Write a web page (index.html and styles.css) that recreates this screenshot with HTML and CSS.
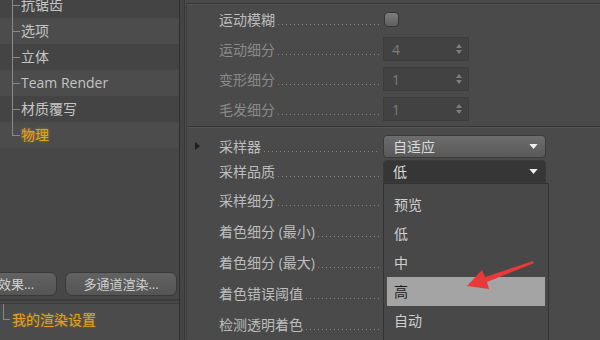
FILE: index.html
```html
<!DOCTYPE html>
<html lang="zh-CN">
<head>
    <meta charset="UTF-8">
    <title>渲染设置 - 物理</title>
    <link rel="stylesheet" href="styles.css">
</head>
<body>
    <div class="app">
        <aside class="sidebar">
            <ul class="tree">
                <li>抗锯齿</li>
                <li>选项</li>
                <li>立体</li>
                <li>Team Render</li>
                <li>材质覆写</li>
                <li class="active">物理</li>
            </ul>
            <div class="sidebar-buttons">
                <button class="btn">效果...</button>
                <button class="btn">多通道渲染...</button>
            </div>
            <div class="presets">
                <div class="preset">我的渲染设置</div>
            </div>
        </aside>

        <div class="splitter"></div>

        <main class="main">
            <!-- 运动模糊 -->
            <section class="group group-top">
                <div class="row">
                    <span class="marker"></span>
                    <span class="label">运动模糊</span>
                    <span class="checkbox"></span>
                </div>
                <div class="row disabled">
                    <span class="marker"></span>
                    <span class="label">运动细分</span>
                    <span class="number">4<svg class="spin" width="6" height="10" viewBox="0 0 6 10"><path d="M3 0 L6 4 H0 Z M3 10 L6 6 H0 Z"/></svg></span>
                </div>
                <div class="row disabled">
                    <span class="marker"></span>
                    <span class="label">变形细分</span>
                    <span class="number">1<svg class="spin" width="6" height="10" viewBox="0 0 6 10"><path d="M3 0 L6 4 H0 Z M3 10 L6 6 H0 Z"/></svg></span>
                </div>
                <div class="row disabled">
                    <span class="marker"></span>
                    <span class="label">毛发细分</span>
                    <span class="number">1<svg class="spin" width="6" height="10" viewBox="0 0 6 10"><path d="M3 0 L6 4 H0 Z M3 10 L6 6 H0 Z"/></svg></span>
                </div>
            </section>

            <!-- 采样器 -->
            <section class="group group-sampler">
                <div class="row row-select">
                    <span class="marker"><svg width="5" height="8" viewBox="0 0 5 8"><path d="M0 0 L5 4 L0 8 Z" fill="#1e1e1e"/></svg></span>
                    <span class="label">采样器</span>
                    <span class="select">自适应<svg class="caret" width="9" height="5" viewBox="0 0 10 6"><path d="M0 0 H10 L5 6 Z"/></svg></span>
                </div>
                <div class="row row-select">
                    <span class="marker"></span>
                    <span class="label">采样品质</span>
                    <span class="select open">低<svg class="caret" width="9" height="5" viewBox="0 0 10 6"><path d="M0 0 H10 L5 6 Z"/></svg>
                        <ul class="menu">
                            <li>预览</li>
                            <li>低</li>
                            <li>中</li>
                            <li class="hover">高</li>
                            <li>自动</li>
                        </ul>
                    </span>
                </div>
                <div class="row row-tall">
                    <span class="marker"></span>
                    <span class="label">采样细分</span>
                </div>
                <div class="row row-tall">
                    <span class="marker"></span>
                    <span class="label">着色细分 (最小)</span>
                </div>
                <div class="row row-tall">
                    <span class="marker"></span>
                    <span class="label">着色细分 (最大)</span>
                </div>
                <div class="row row-tall">
                    <span class="marker"></span>
                    <span class="label">着色错误阈值</span>
                </div>
                <div class="row row-tall">
                    <span class="marker"></span>
                    <span class="label">检测透明着色</span>
                </div>
            </section>
        </main>
    </div>

    <!-- 标注箭头 -->
    <svg class="pointer" width="80" height="36" viewBox="0 0 80 36">
        <polygon points="7,28 22,12 25,19 73,3 73.8,5.2 27,24 29,31" fill="#e8393a"/>
    </svg>
</body>
</html>
```

FILE: styles.css
```css
:root {
    --panel: #4a4a4a;
    --side: #474747;
    --text: #c4c4c4;
    --text-dim: #8a8a8a;
    --orange: #e3a11f;
    --line: #353535;
}

* {
    box-sizing: border-box;
}

body {
    margin: 0;
    width: 600px;
    height: 340px;
    overflow: hidden;
    background-color: var(--panel);
    font-family: 'Open Sans', 'Noto Sans CJK SC', sans-serif;
    font-size: 14px;
    color: var(--text);
}

.app {
    display: flex;
    height: 340px;
}

/* 左侧树 */
.sidebar {
    width: 180px;
    flex-shrink: 0;
    display: flex;
    flex-direction: column;
    background-color: var(--side);
    border-right: 1px solid #2f2f2f;
}

.tree {
    list-style: none;
    margin: -8px 0 0;
    padding: 0;
}

.tree li {
    height: 26px;
    line-height: 26px;
    padding-left: 21px;
    background:
        linear-gradient(#8a8a8a, #8a8a8a) 12px 0 / 1px 100% no-repeat,
        linear-gradient(#8a8a8a, #8a8a8a) 12px 13px / 8px 1px no-repeat,
        #444;
}

.tree li:nth-child(even) {
    background:
        linear-gradient(#8a8a8a, #8a8a8a) 12px 0 / 1px 100% no-repeat,
        linear-gradient(#8a8a8a, #8a8a8a) 12px 13px / 8px 1px no-repeat,
        #4c4c4c;
}

.tree li.active {
    color: var(--orange);
    text-shadow: 0 0 3px rgba(255, 190, 0, 0.55);
    background:
        linear-gradient(#8a8a8a, #8a8a8a) 12px 0 / 1px 14px no-repeat,
        linear-gradient(#8a8a8a, #8a8a8a) 12px 13px / 8px 1px no-repeat,
        #4c4c4c;
}

.sidebar-buttons {
    display: flex;
    gap: 8px;
    margin: auto 0 0 -25px;
    padding-bottom: 3px;
    border-bottom: 2px solid #3c3c3c;
}

.btn {
    height: 24px;
    padding: 0;
    border: 1px solid #393939;
    border-radius: 7px;
    background: linear-gradient(#626262, #555);
    color: #cfcfcf;
    font-family: inherit;
    font-size: 13px;
    line-height: 20px;
    text-align: center;
}

.btn:first-child {
    width: 82px;
}

.btn:last-child {
    width: 112px;
}

.presets {
    height: 37px;
    margin-top: 2px;
    padding: 0 0 0 3px;
    background-color: #4b4b4b;
    border-top: 1px solid #3d3d3d;
}

.preset {
    height: 100%;
    padding: 5px 0 0 9px;
    color: var(--orange);
    text-shadow: 0 0 2px rgba(255, 190, 0, 0.35);
    background:
        linear-gradient(#888, #888) 0 0 / 1px 16px no-repeat,
        linear-gradient(#888, #888) 0 15px / 7px 1px no-repeat;
}

.splitter {
    width: 4px;
    flex-shrink: 0;
    background-color: #444;
}

/* 右侧属性 */
.main {
    flex: 1;
    padding: 3px 0 0 1px;
    border-left: 1px solid #383838;
    background-color: var(--panel);
}

.group {
    border-top: 1px solid var(--line);
    border-left: 1px solid #3d3d3d;
    box-shadow: inset 0 1px 0 #555;
}

.group-top {
    height: 123px;
}

.group-sampler {
    padding-top: 7px;
}

.row {
    display: flex;
    align-items: center;
    height: 30px;
    padding-left: 8px;
}

.row-select {
    height: 26px;
}

.row-select:first-child {
    height: 24px;
}

.row-tall {
    height: 31px;
}

.marker {
    width: 24px;
    display: flex;
    align-items: center;
}

.label {
    width: 160px;
    margin-right: 4px;
    display: flex;
    align-items: baseline;
    white-space: nowrap;
    color: #bdbdbd;
}

.label::after {
    content: "";
    flex: 1;
    height: 6px;
    margin-left: 3px;
    background-image: linear-gradient(to right, #858585 1px, transparent 1px);
    background-size: 4px 1px;
    background-repeat: repeat-x;
    background-position: 0 100%;
}

.disabled .label {
    color: var(--text-dim);
}

.checkbox {
    width: 15px;
    height: 15px;
    margin-left: 1px;
    border: 1px solid #363636;
    border-radius: 4px;
    background: linear-gradient(#7d7d7d, #5f5f5f);
}

.number {
    width: 86px;
    height: 24px;
    display: flex;
    align-items: center;
    justify-content: space-between;
    padding: 0 6px 0 8px;
    background-color: #424242;
    border: 1px solid #3d3d3d;
    color: #7c7c7c;
}

.spin {
    fill: #7e7e7e;
}

.select {
    position: relative;
    width: 163px;
    height: 23px;
    display: flex;
    align-items: center;
    justify-content: space-between;
    padding: 0 7px 0 9px;
    border: 1px solid #3a3a3a;
    border-radius: 4px;
    background: linear-gradient(#6d6d6d, #595959);
    color: #dcdcdc;
}

.select.open {
    background: #363636;
    border-radius: 4px 4px 0 0;
}

.caret {
    fill: #eee;
}

.menu {
    position: absolute;
    top: 22px;
    left: -1px;
    width: 166px;
    margin: 0;
    padding: 6px 3px 8px;
    list-style: none;
    background-color: #484848;
    border: 1px solid #333;
    z-index: 2;
}

.menu li {
    height: 29px;
    line-height: 29px;
    padding-left: 7px;
    color: #d0d0d0;
}

.menu li.hover {
    background-color: #a4a4a4;
    color: #1c1c1c;
}

/* 标注 */
.pointer {
    position: absolute;
    left: 460px;
    top: 258px;
    z-index: 3;
}
```
